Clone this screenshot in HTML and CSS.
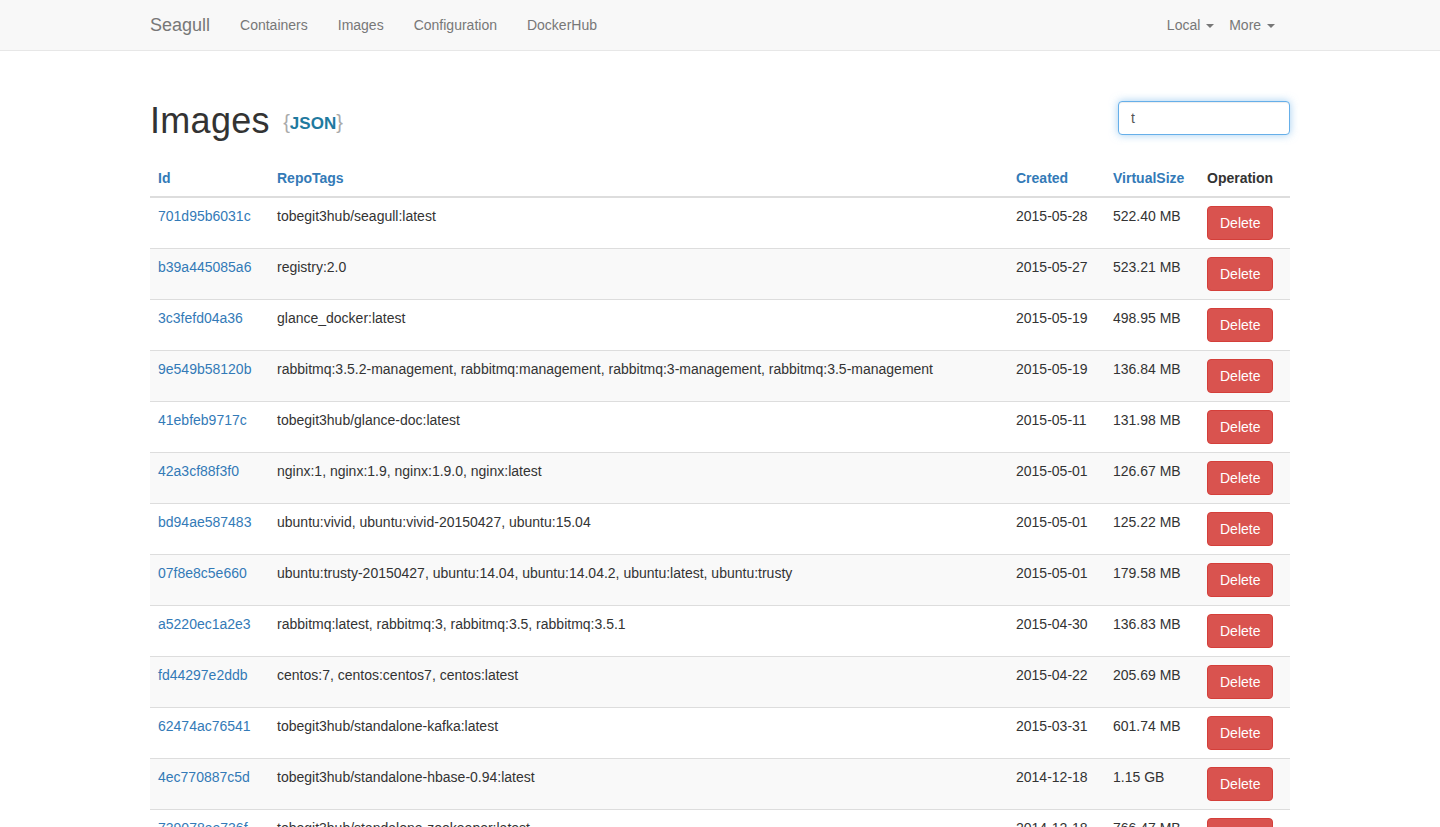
FILE: index.html
```html
<!DOCTYPE html>
<html>
<head>
<meta charset="utf-8">
<title>Seagull - Images</title>
<link rel="stylesheet" href="styles.css">
</head>
<body>
<nav class="navbar">
  <div class="container nav-inner">
    <div class="nav-left">
      <a class="brand" href="#">Seagull</a>
      <a class="nav-link" href="#">Containers</a>
      <a class="nav-link" href="#">Images</a>
      <a class="nav-link" href="#">Configuration</a>
      <a class="nav-link" href="#">DockerHub</a>
    </div>
    <div class="nav-right">
      <a class="nav-link" href="#">Local <span class="caret"></span></a>
      <a class="nav-link" href="#">More <span class="caret"></span></a>
    </div>
  </div>
</nav>
<div class="container">
  <div class="page-head">
    <h1 class="title">Images <a class="json" href="#"><span class="brace">{</span>JSON<span class="brace">}</span></a></h1>
    <input class="search" type="text" value="t">
  </div>
  <table class="table">
    <thead>
      <tr>
        <th class="c-id"><a href="#">Id</a></th>
        <th class="c-tags"><a href="#">RepoTags</a></th>
        <th class="c-created"><a href="#">Created</a></th>
        <th class="c-size"><a href="#">VirtualSize</a></th>
        <th class="c-op">Operation</th>
      </tr>
    </thead>
    <tbody>
      <tr><td><a href="#">701d95b6031c</a></td><td>tobegit3hub/seagull:latest</td><td>2015-05-28</td><td>522.40 MB</td><td><button class="btn-del">Delete</button></td></tr>
      <tr><td><a href="#">b39a445085a6</a></td><td>registry:2.0</td><td>2015-05-27</td><td>523.21 MB</td><td><button class="btn-del">Delete</button></td></tr>
      <tr><td><a href="#">3c3fefd04a36</a></td><td>glance_docker:latest</td><td>2015-05-19</td><td>498.95 MB</td><td><button class="btn-del">Delete</button></td></tr>
      <tr><td><a href="#">9e549b58120b</a></td><td>rabbitmq:3.5.2-management, rabbitmq:management, rabbitmq:3-management, rabbitmq:3.5-management</td><td>2015-05-19</td><td>136.84 MB</td><td><button class="btn-del">Delete</button></td></tr>
      <tr><td><a href="#">41ebfeb9717c</a></td><td>tobegit3hub/glance-doc:latest</td><td>2015-05-11</td><td>131.98 MB</td><td><button class="btn-del">Delete</button></td></tr>
      <tr><td><a href="#">42a3cf88f3f0</a></td><td>nginx:1, nginx:1.9, nginx:1.9.0, nginx:latest</td><td>2015-05-01</td><td>126.67 MB</td><td><button class="btn-del">Delete</button></td></tr>
      <tr><td><a href="#">bd94ae587483</a></td><td>ubuntu:vivid, ubuntu:vivid-20150427, ubuntu:15.04</td><td>2015-05-01</td><td>125.22 MB</td><td><button class="btn-del">Delete</button></td></tr>
      <tr><td><a href="#">07f8e8c5e660</a></td><td>ubuntu:trusty-20150427, ubuntu:14.04, ubuntu:14.04.2, ubuntu:latest, ubuntu:trusty</td><td>2015-05-01</td><td>179.58 MB</td><td><button class="btn-del">Delete</button></td></tr>
      <tr><td><a href="#">a5220ec1a2e3</a></td><td>rabbitmq:latest, rabbitmq:3, rabbitmq:3.5, rabbitmq:3.5.1</td><td>2015-04-30</td><td>136.83 MB</td><td><button class="btn-del">Delete</button></td></tr>
      <tr><td><a href="#">fd44297e2ddb</a></td><td>centos:7, centos:centos7, centos:latest</td><td>2015-04-22</td><td>205.69 MB</td><td><button class="btn-del">Delete</button></td></tr>
      <tr><td><a href="#">62474ac76541</a></td><td>tobegit3hub/standalone-kafka:latest</td><td>2015-03-31</td><td>601.74 MB</td><td><button class="btn-del">Delete</button></td></tr>
      <tr><td><a href="#">4ec770887c5d</a></td><td>tobegit3hub/standalone-hbase-0.94:latest</td><td>2014-12-18</td><td>1.15 GB</td><td><button class="btn-del">Delete</button></td></tr>
      <tr><td><a href="#">739078ae736f</a></td><td>tobegit3hub/standalone-zookeeper:latest</td><td>2014-12-18</td><td>766.47 MB</td><td><button class="btn-del">Delete</button></td></tr>
    </tbody>
  </table>
</div>
</body>
</html>
```
FILE: styles.css
```css
* { box-sizing: border-box; }
html, body { margin: 0; padding: 0; }
body {
  font-family: "Liberation Sans", Arial, sans-serif;
  font-size: 14px;
  line-height: 1.42857;
  color: #333;
  background: #fff;
}
a { color: #337ab7; text-decoration: none; }
.container {
  width: 1170px;
  margin: 0 auto;
  padding: 0 15px;
}
.navbar {
  background: #f8f8f8;
  border-bottom: 1px solid #e7e7e7;
  height: 51px;
}
.nav-inner {
  display: flex;
  justify-content: space-between;
  height: 50px;
}
.nav-left, .nav-right { display: flex; align-items: stretch; }
.nav-right { margin-right: 15px; }
.brand {
  font-size: 18px;
  line-height: 20px;
  color: #777;
  padding: 15px 15px 15px 0;
}
.nav-link {
  color: #777;
  padding: 15px;
  line-height: 20px;
  font-size: 14px;
}
.nav-right .nav-link { padding: 15px 0 15px 15px; }
.nav-right .nav-link:first-child { padding-left: 0; }
.caret {
  display: inline-block;
  width: 0;
  height: 0;
  margin-left: 2px;
  vertical-align: middle;
  border-top: 4px solid #777;
  border-left: 4px solid transparent;
  border-right: 4px solid transparent;
}
.page-head {
  display: flex;
  justify-content: space-between;
  align-items: flex-start;
  padding-top: 50px;
}
.title {
  margin: 0;
  font-size: 36px;
  font-weight: 500;
  line-height: 40px;
  color: #333;
  letter-spacing: 0.3px;
}
.json {
  font-size: 17px;
  font-weight: bold;
  color: #1f7a9f;
  margin-left: 3px;
  letter-spacing: 0;
  vertical-align: 4px;
}
.brace {
  color: #aaa;
  font-weight: normal;
  font-size: 20px;
}
.search {
  width: 172px;
  height: 34px;
  padding: 6px 12px;
  font-family: "Liberation Sans", Arial, sans-serif;
  font-size: 14px;
  color: #555;
  border: 1px solid #66afe9;
  border-radius: 4px;
  outline: 0;
  box-shadow: inset 0 1px 1px rgba(0,0,0,.075), 0 0 8px rgba(102,175,233,.6);
}
.table {
  width: 100%;
  border-collapse: collapse;
  border-spacing: 0;
  margin-top: 16px;
}
.table th {
  text-align: left;
  font-weight: bold;
  padding: 8px;
  line-height: 20px;
  border-bottom: 2px solid #ddd;
  vertical-align: bottom;
}
.table td {
  padding: 8px;
  line-height: 20px;
  vertical-align: top;
  border-top: 1px solid #ddd;
}
.table tbody tr:nth-child(even) { background: #f9f9f9; }
.c-id { width: 119px; }
.c-created { width: 97px; }
.c-size { width: 94px; }
.c-op { width: 91px; }
.btn-del {
  display: inline-block;
  font-family: "Liberation Sans", Arial, sans-serif;
  font-size: 14px;
  line-height: 20px;
  padding: 6px 12px;
  color: #fff;
  background: #d9534f;
  border: 1px solid #d43f3a;
  border-radius: 4px;
  width: 66px;
  text-align: center;
}
```
